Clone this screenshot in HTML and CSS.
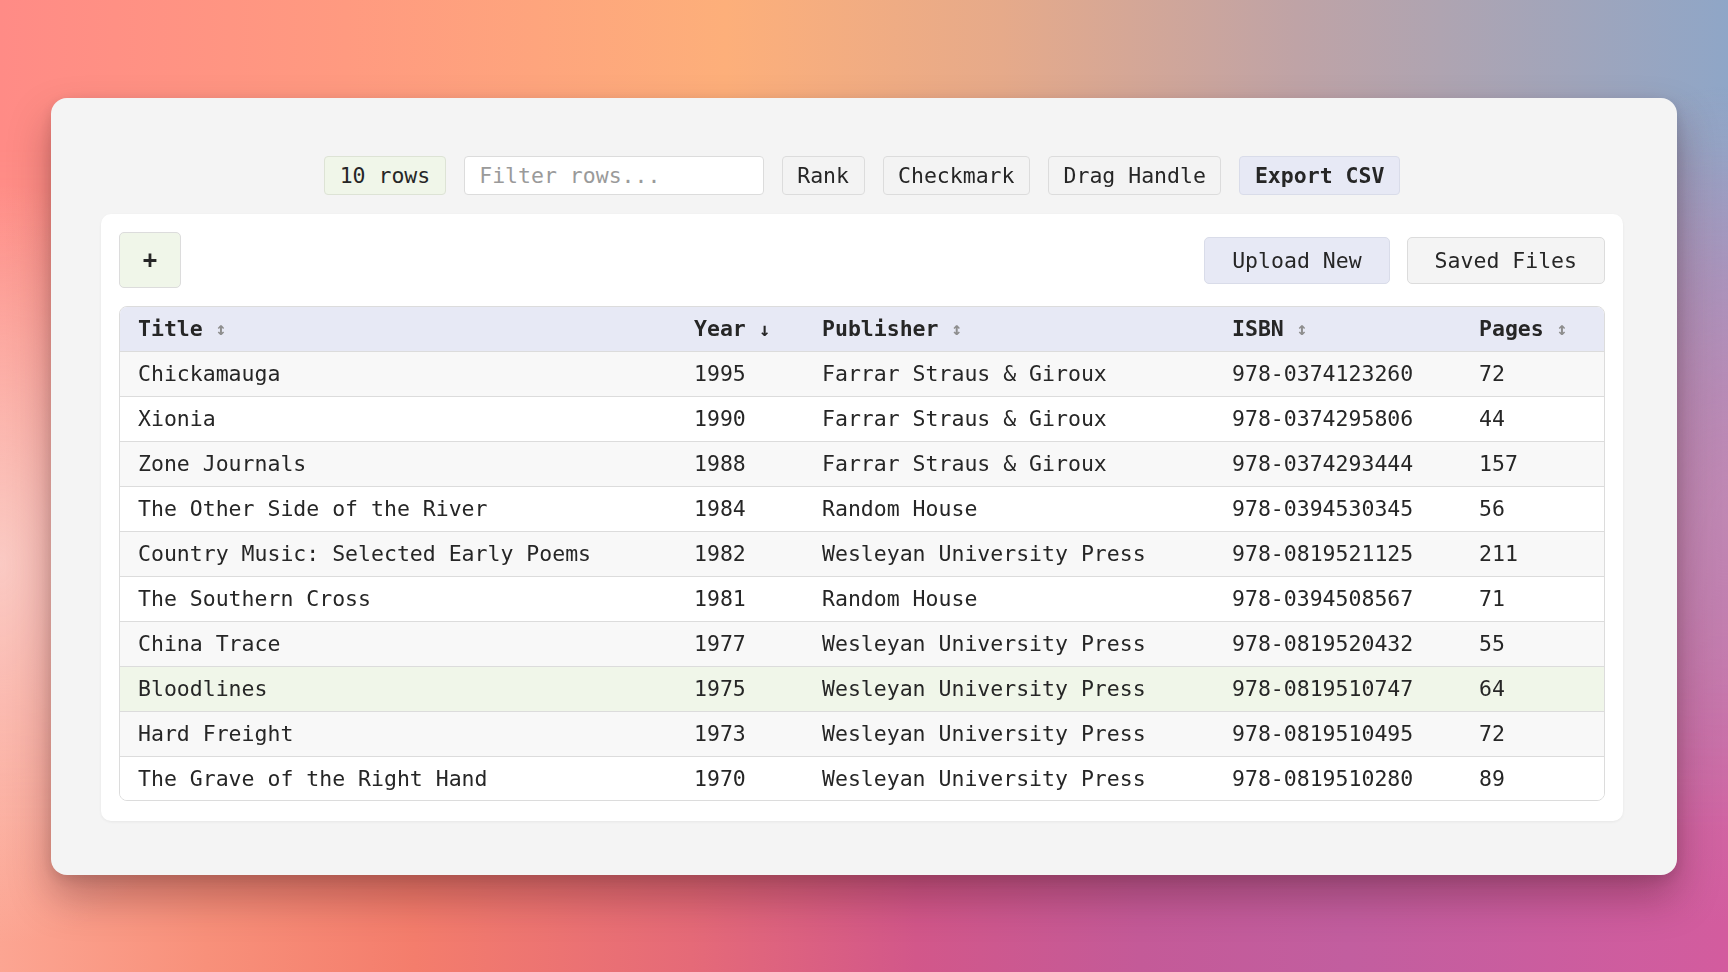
FILE: index.html
```html
<!DOCTYPE html>
<html lang="en">
<head>
<meta charset="utf-8">
<title>Books</title>
<link rel="stylesheet" href="styles.css">
</head>
<body>
<div class="bg-bottom"></div>
<div class="bg-pink"></div>
<main class="card">
  <div class="toolbar">
    <span class="badge">10 rows</span>
    <input class="filter" type="text" placeholder="Filter rows...">
    <button class="tbtn">Rank</button>
    <button class="tbtn">Checkmark</button>
    <button class="tbtn">Drag Handle</button>
    <button class="tbtn tbtn-primary">Export CSV</button>
  </div>
  <section class="panel">
    <div class="panel-bar">
      <button class="add">+</button>
      <div class="panel-actions">
        <button class="pbtn pbtn-primary">Upload New</button>
        <button class="pbtn">Saved Files</button>
      </div>
    </div>
    <div class="table-wrap">
      <table class="books">
        <colgroup>
          <col class="c-title"><col class="c-year"><col class="c-pub"><col class="c-isbn"><col class="c-pages">
        </colgroup>
        <thead>
          <tr>
            <th>Title <span class="sort">↕</span></th>
            <th>Year <span class="sort sort-on">↓</span></th>
            <th>Publisher <span class="sort">↕</span></th>
            <th>ISBN <span class="sort">↕</span></th>
            <th>Pages <span class="sort">↕</span></th>
          </tr>
        </thead>
        <tbody>
          <tr><td>Chickamauga</td><td>1995</td><td>Farrar Straus &amp; Giroux</td><td>978-0374123260</td><td>72</td></tr>
          <tr><td>Xionia</td><td>1990</td><td>Farrar Straus &amp; Giroux</td><td>978-0374295806</td><td>44</td></tr>
          <tr><td>Zone Journals</td><td>1988</td><td>Farrar Straus &amp; Giroux</td><td>978-0374293444</td><td>157</td></tr>
          <tr><td>The Other Side of the River</td><td>1984</td><td>Random House</td><td>978-0394530345</td><td>56</td></tr>
          <tr><td>Country Music: Selected Early Poems</td><td>1982</td><td>Wesleyan University Press</td><td>978-0819521125</td><td>211</td></tr>
          <tr><td>The Southern Cross</td><td>1981</td><td>Random House</td><td>978-0394508567</td><td>71</td></tr>
          <tr><td>China Trace</td><td>1977</td><td>Wesleyan University Press</td><td>978-0819520432</td><td>55</td></tr>
          <tr class="selected"><td>Bloodlines</td><td>1975</td><td>Wesleyan University Press</td><td>978-0819510747</td><td>64</td></tr>
          <tr><td>Hard Freight</td><td>1973</td><td>Wesleyan University Press</td><td>978-0819510495</td><td>72</td></tr>
          <tr><td>The Grave of the Right Hand</td><td>1970</td><td>Wesleyan University Press</td><td>978-0819510280</td><td>89</td></tr>
        </tbody>
      </table>
    </div>
  </section>
</main>
</body>
</html>
```
FILE: styles.css
```css
* { box-sizing: border-box; }

html, body { height: 100%; }

body {
  margin: 0;
  padding: 98px 51px;
  font-family: "DejaVu Sans Mono", "Liberation Mono", monospace;
  font-size: 21.5px;
  color: #262626;
  background: linear-gradient(90deg, #ff8b86 0%, #ff9a80 20%, #fdaf7a 42%, #e6aa8a 58%, #bfa3a6 75%, #8fa6c7 100%);
  position: relative;
  overflow: hidden;
  isolation: isolate;
}

.bg-bottom {
  position: fixed;
  inset: 0;
  z-index: -2;
  pointer-events: none;
  background: linear-gradient(90deg, #fca592 0%, #f8907a 12%, #f47d6c 24%, #e56a78 40%, #d2578a 53%, #c45a98 66%, #c25e9f 78%, #d35c9e 100%);
  -webkit-mask-image: linear-gradient(to bottom, transparent 15%, rgba(0,0,0,0.6) 55%, #000 85%);
  mask-image: linear-gradient(to bottom, transparent 15%, rgba(0,0,0,0.6) 55%, #000 85%);
}

.bg-pink {
  position: fixed;
  inset: 0;
  z-index: -1;
  pointer-events: none;
  background:
    radial-gradient(ellipse 260px 380px at 0% 58%, rgba(250, 204, 198, 0.95), rgba(250, 204, 198, 0) 100%),
    radial-gradient(ellipse 260px 420px at 100% 52%, rgba(196, 140, 180, 0.7), rgba(196, 140, 180, 0) 100%);
}

.card {
  background: #f4f4f4;
  border-radius: 16px;
  padding: 58px 54px 54px 50px;
  box-shadow: 0 22px 40px rgba(70, 20, 30, 0.35), 0 4px 14px rgba(0, 0, 0, 0.12);
  display: flex;
  flex-direction: column;
  gap: 19px;
}

.toolbar {
  display: flex;
  justify-content: center;
  align-items: center;
  gap: 18px;
  height: 39px;
}

.badge, .filter, .tbtn {
  height: 39px;
  border: 1px solid #dcdcdc;
  border-radius: 4px;
  font-family: inherit;
  font-size: 21.5px;
  color: #262626;
  display: inline-flex;
  align-items: center;
  padding: 0 14.5px;
}

.badge {
  background: #f0f6e9;
  border-color: #dde3d5;
}

.filter {
  width: 300px;
  background: #fff;
  outline: none;
}

.filter::placeholder { color: #9a9a9a; }

.tbtn {
  background: #f3f3f3;
  cursor: pointer;
}

.tbtn-primary {
  background: #e7e9f5;
  border-color: #d9dce9;
  font-weight: bold;
}

.panel {
  background: #fff;
  border-radius: 10px;
  padding: 18px 18px 20px;
  box-shadow: 0 1px 3px rgba(0, 0, 0, 0.06);
  display: flex;
  flex-direction: column;
  gap: 18px;
}

.panel-bar {
  display: flex;
  align-items: center;
  justify-content: space-between;
}

.add {
  width: 62px;
  height: 56px;
  background: #f0f6e9;
  border: 1px solid #dcdcdc;
  border-radius: 5px;
  font-family: inherit;
  font-size: 24px;
  font-weight: bold;
  color: #262626;
  cursor: pointer;
  padding: 0;
}

.panel-actions {
  display: flex;
  gap: 17px;
}

.pbtn {
  height: 47px;
  padding: 0 27px;
  border: 1px solid #dcdcdc;
  border-radius: 5px;
  background: #f4f4f4;
  font-family: inherit;
  font-size: 21.5px;
  color: #262626;
  cursor: pointer;
}

.pbtn-primary {
  background: #e7e9f5;
  border-color: #d9dce9;
}

.table-wrap {
  border: 1px solid #dcdcdc;
  border-radius: 8px;
  overflow: hidden;
}

.books {
  width: 100%;
  border-collapse: collapse;
  table-layout: fixed;
}

.c-title { width: 556px; }
.c-year { width: 128px; }
.c-pub { width: 410px; }
.c-isbn { width: 247px; }

.books th, .books td {
  height: 45px;
  padding: 0 18px;
  text-align: left;
  white-space: nowrap;
  vertical-align: middle;
}

.books th {
  background: #e7e9f5;
  font-weight: bold;
  height: 44px;
  border-bottom: 1px solid #dcdcdc;
}

.books td {
  border-bottom: 1px solid #dcdcdc;
}

.books tbody tr:last-child td { border-bottom: none; height: 44px; }

.books tbody tr:nth-child(odd) td { background: #f8f8f8; }
.books tbody tr:nth-child(even) td { background: #fff; }
.books tbody tr.selected td { background: #f0f6e9; }

.sort {
  font-size: 18px;
  font-weight: bold;
  color: #8e8e8e;
  vertical-align: 1px;
}

.sort-on {
  font-size: 19px;
  color: #262626;
  vertical-align: 0;
}
```
